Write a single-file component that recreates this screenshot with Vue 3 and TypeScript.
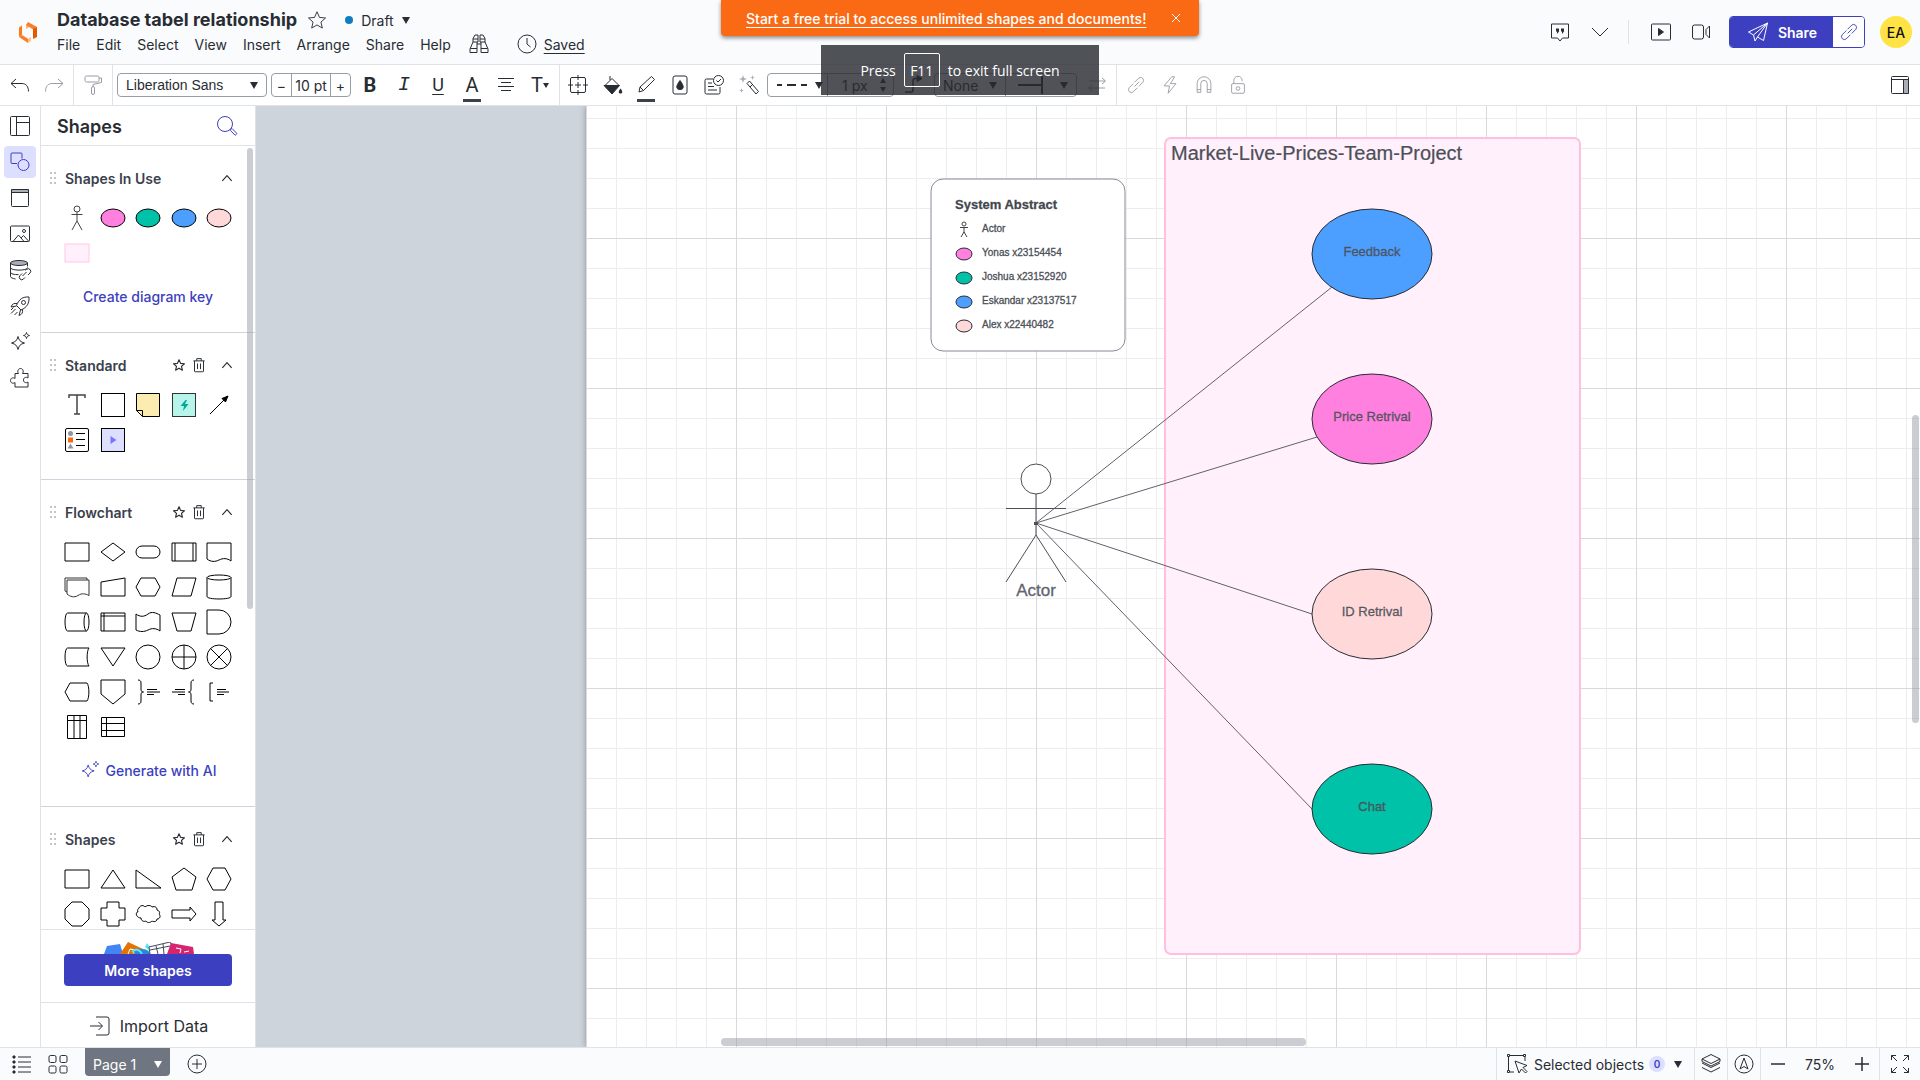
<script setup lang="ts">
import { ref } from 'vue'

// 24x24 line icons, stroked with the current text colour
const icons: Record<string, string> = {
  undo: '<path d="M8 6l-5 4.500 5 4.500M3 10.500h11c4 0 6.500 3 6.500 8"/>',
  redo: '<path d="M16 6l5 4.500-5 4.500M21 10.500H10c-4 0-6.500 3-6.500 8"/>',
  painter: '<rect x="4" y="3" width="14" height="6" rx="1.500"/><path d="M18 5h2.500v4.500l-8.500 2V14"/><rect x="10.500" y="13.500" width="3" height="8" rx="1.500"/>',
  align: '<path d="M4 5.500h16M7 9.500h10M4 13.500h16M7 17.500h10"/>',
  frame: '<rect x="4.500" y="4.500" width="15" height="15" rx="1.500"/><path d="M12 2v5M12 9v6M12 17v5M2 12h5M9 12h6M17 12h5"/>',
  bucket: '<path d="M10 3v4M5 12.500l7-7 7 7"/><path d="M4 12.500h15.500L12 21z" fill="currentColor"/><path d="M20.500 15.500c3 4 1.500 5 0 5s-3-1 0-5z" fill="currentColor" stroke="none"/>',
  pencil: '<path d="M5 19l1-5L17.500 3.500l3 3L9.500 17.500zM6 14l3.500 3.500"/>',
  drop: '<rect x="5" y="3" width="14" height="18" rx="2"/><path d="M12 7.500c5 6.500 3.500 9 0 9s-5-2.500 0-9z" fill="currentColor"/>',
  note: '<path d="M11 6H4.500a1.500 1.500 0 0 0-1.500 1.500v12A1.500 1.500 0 0 0 4.500 21h12a1.500 1.500 0 0 0 1.500-1.500V14M6 10h4M6 13.500h6M6 17h9"/><circle cx="16.500" cy="7.500" r="5"/><path d="M14.500 7.500l1.500 1.500 3-3"/>',
  wand: '<path d="M11 10.500l2.500-2.500 9 10.500-2.500 2.500zM14 14l2.500-2.500"/><path d="M7 2l1 3 3 1-3 1-1 3-1-3-3-1 3-1zM16.500 2l.6 1.900 1.900.6-1.900.6-.6 1.900-.6-1.900-1.900-.6 1.900-.6zM5.500 15l.6 1.900 1.900.6-1.900.6-.6 1.900-.6-1.900-1.900-.6 1.900-.6z" fill="#aaadb5" stroke="none"/>',
  elbow: '<path d="M3 19h6c1.500 0 2-.5 2-2V8c0-1.500.5-2.500 2-2.500h6" stroke-width="1.500"/><path d="M15 2.500v6l5-3z" fill="currentColor"/>',
  swap: '<path d="M4 8h16M17 5l3.500 3-3.500 3M20 15H4M7 12l-3.500 3L7 18"/>',
  link: '<path d="M10.500 13.500l5-5M9 10.500l-4.500 4.500a3.200 3.200 0 0 0 4.500 4.500l4.500-4.500M10.500 9l4.500-4.500a3.200 3.200 0 0 1 4.500 4.500L15 13.500"/>',
  bolt: '<path d="M14 3l-8.500 10h6L10 21l8.500-10.500h-6L17 3z"/>',
  magnet: '<path d="M4.500 20v-9.500a7.500 7.500 0 0 1 15 0V20h-4v-9.500a3.500 3.500 0 0 0-7 0V20zM4.500 17h4M15.500 17h4"/>',
  lock: '<rect x="5" y="10.500" width="14" height="10.500" rx="1.500"/><path d="M7.500 10.500V7a4.500 4.500 0 0 1 9 0v1"/><circle cx="12" cy="15.800" r="2"/>',
  dock: '<rect x="3.500" y="3.500" width="17" height="17" rx="1"/><path d="M15.500 6.500h5v14h-5z" fill="#aaadb5"/><path d="M3.500 6.500h17"/>',
  star: '<path d="M12 3l2.700 6.200 6.600.6-5 4.500 1.500 6.500-5.800-3.400-5.800 3.400 1.500-6.500-5-4.500 6.600-.6z"/>',
  binoculars: '<path d="M8 3h3v7H6V6.500zM16 3h-3v7h5V6.500zM6 7h5M13 7h5M6 10l-3 7v3.500h7V10M18 10l3 7v3.500h-7V10M3.500 16.500H10M14 16.500h6.500M10 12h4"/>',
  clock: '<circle cx="12" cy="12" r="9"/><path d="M12 6v6l3.500 3"/>',
  comment: '<path d="M3.500 4h17v14H14.500l-2.500 3-2.500-3h-6z"/><path d="M8 8.500h3v3l-2 2.500v-2.500H8zM13 8.500h3v3l-2 2.500v-2.500h-1z" fill="currentColor" stroke="none"/>',
  down: '<path d="M4 8l8 8 8-8"/>',
  up: '<path d="M4 17l8-9 8 9"/>',
  play: '<rect x="2.500" y="4" width="19" height="16" rx="1"/><path d="M9.500 8.500v7l5-3.500z" fill="currentColor"/>',
  video: '<rect x="3.500" y="5" width="11" height="14" rx="2"/><path d="M17 9.500L20.500 6v12L17 14.500z"/>',
  plane: '<path d="M21.500 3L2.500 12l5 3 14-12-10 14 6 3.500zM7.500 15l1.500 6 2.500-4"/>',
  layout: '<rect x="2.500" y="2.500" width="19" height="19" rx="1"/><path d="M8.500 2.500v19M8.500 8.500h13"/>',
  shapes: '<path d="M9 13.500H4A1 1 0 0 1 3 12.500V4a1 1 0 0 1 1-1h9a1 1 0 0 1 1 1v4.500"/><circle cx="15.500" cy="15" r="5.500"/>',
  page: '<path d="M3.500 3.500h17v3h-17z" fill="#aaadb5"/><rect x="3.500" y="3.500" width="17" height="17" rx="1"/><path d="M3.500 6.500h17"/>',
  image: '<rect x="2.500" y="4" width="19" height="15.500" rx="1"/><path d="M5 19.500l5.500-6.500 5.500 6.500M13 16l2.500-2.500 5 5.500"/><circle cx="16" cy="9" r="1.500"/>',
  database: '<ellipse cx="11" cy="5" rx="8.500" ry="2.500" fill="#aaadb5"/><path d="M2.500 5v13.500c0 1 2 2 5 2.500M19.500 5v3.500M2.500 9.500c0 3.500 17 3.500 17 0M2.500 14c0 2 4 2.700 8 2.600"/><path d="M14.500 18l4-4M14 15.500l-2 2a2.300 2.300 0 0 0 3.500 3.500l1.500-1.500M17.500 12.500l1-1a2.300 2.300 0 0 1 3.500 3.500l-2 2"/>',
  rocket: '<path d="M21 3c-6-.5-10 2-12.500 8.500l4.500 4.500C19 13.500 21.500 9 21 3zM9 9.500c-3-.5-5 .5-6 3.500l5.500-1M14.500 15.500c.5 3-.5 5-3.500 6l1.500-5.500"/><circle cx="15.500" cy="8.500" r="2"/><path d="M7.500 15L3 19.500M5.500 13.500L3 16M9.500 18L6.500 21"/>',
  sparkle: '<path d="M10 6.500c1 4 2.500 5.500 6.500 6.500-4 1-5.500 2.500-6.500 6.500-1-4-2.500-5.500-6.500-6.500 4-1 5.500-2.500 6.500-6.500z"/><path d="M18.500 2.500c.5 2 1 2.500 3 3-2 .5-2.500 1-3 3-.5-2-1-2.500-3-3 2-.5 2.500-1 3-3z"/>',
  puzzle: '<path d="M7 7.500h3.500c-1.500-2-.5-5 2-5s3.500 3 2 5H20V12c-2-1.500-4.500-.5-4.500 2s2.500 3.500 4.500 2v5H7v-4.500c-2 1.500-4.500.5-4.500-2s2.500-3.500 4.500-2z"/>',
  search: '<circle cx="10" cy="10" r="7.500"/><path d="M15.500 15.500l1.500-1 5 5-1.800 1.800-5-5z"/>',
  trash: '<path d="M4.500 6.500h15M6 6.500v13.500a1 1 0 0 0 1 1h10a1 1 0 0 0 1-1V6.500M9 6.500v-3h6v3M10 10v7.500M14 10v7.500"/>',
  import: '<path d="M8 3h11a2 2 0 0 1 2 2v14a2 2 0 0 1-2 2H8M2 12h12M10.500 8l4 4-4 4"/>',
  list: '<path d="M8 5h13M8 10h13M8 15h13M8 20h13"/><path d="M3 4h2v2H3zM3 9h2v2H3zM3 14h2v2H3zM3 19h2v2H3z" fill="currentColor"/>',
  grid: '<rect x="3" y="3.500" width="7" height="7" rx="1.500"/><rect x="14" y="3.500" width="7" height="7" rx="1.500"/><rect x="3" y="14" width="7" height="7" rx="1.500"/><rect x="14" y="14" width="7" height="7" rx="1.500"/>',
  add: '<circle cx="12" cy="12" r="9"/><path d="M12 7v10M7 12h10"/>',
  pick: '<path d="M5 3.500h13.500M3.500 5v13.500M20 5v4M5 20h4"/><rect x="2.500" y="2.500" width="2" height="2"/><rect x="18.500" y="2.500" width="2" height="2"/><rect x="2.500" y="18.500" width="2" height="2"/><path d="M10 9l4 12 2.500-4 4 4 1.500-1.500-4-4 4-2z"/>',
  layers: '<path d="M12 2.500l9 4.500-9 4.500L3 7zM3 11l9 4.500 9-4.500M3 15.500l9 4.500 9-4.500M3 7v2.500l9 4.500 9-4.500V7"/>',
  compass: '<circle cx="12" cy="12" r="9"/><path d="M12 6l4 11-4-2.500L8 17z"/>',
  minus: '<path d="M5 12h14" stroke-width="1.500"/>',
  plus: '<path d="M5 12h14M12 5v14" stroke-width="1.500"/>',
  expand: '<path d="M3.500 8V3.500H8M3.500 3.500l5.500 5.500M16 3.500h4.500V8M20.500 3.500L15 9M3.500 16v4.500H8M3.500 20.500L9 15M20.500 16v4.500H16M20.500 20.500L15 15"/>',
}

const menus = ['File', 'Edit', 'Select', 'View', 'Insert', 'Arrange', 'Share', 'Help']
const rail = [
  ['layout', 'Templates'], ['shapes', 'Shapes'], ['page', 'Pages'], ['image', 'Images'],
  ['database', 'Data'], ['rocket', 'Accelerators'], ['sparkle', 'AI'], ['puzzle', 'Extensions'],
]

const oval = (fill: string) => `<ellipse cx="13" cy="13" rx="12" ry="9" fill="${fill}"/>`

// 26x26 shape thumbnails
const sections = [
  {
    title: 'Shapes In Use', editable: false, link: 'Create diagram key', ai: false,
    shapes: [
      '<g stroke="#444"><circle cx="13" cy="4" r="3"/><path d="M13 7v9M7.500 9.500h11M13 16l-5 9M13 16l5 9"/></g>',
      oval('#ff80df'), oval('#00c2a8'), oval('#4d9fff'), oval('#ffd9d9'),
      '<rect x="1" y="4" width="24" height="18" fill="#fff0fc" stroke="#ffc8e2"/>',
    ],
  },
  {
    title: 'Standard', editable: true, link: '', ai: false,
    shapes: [
      '<path d="M5 6V3h16v3M13 3v19M10 22h6" stroke="#444" stroke-width="1.500"/>',
      '<rect x="1.500" y="1.500" width="23" height="23"/>',
      '<path d="M1.500 1.500h23v23H7.500l-6-6z" fill="#fcecb0"/><path d="M1.500 18.500h6v6"/>',
      '<rect x="1.500" y="1.500" width="23" height="23" fill="#b7f5ea" stroke="#333"/><path d="M14.500 8l-5 6h3.500l-1 5 5.500-7H14l2-4z" fill="#00a99a" stroke="none"/>',
      '<path d="M4 22L20 6"/><path d="M22 4l-2.500 6-3.500-3.500z" fill="#000"/>',
      '<rect x="1.500" y="1.500" width="23" height="23" rx="1.500"/><circle cx="6.500" cy="6.500" r="2.500" fill="#8f95a3" stroke="none"/><path d="M4 10.500h5v5H4z" fill="#fa6a14" stroke="none"/><path d="M6.500 16.500l3 5h-6z" fill="#8f95a3" stroke="none"/><path d="M12 6.500h9M12 12.500h9M12 18.500h9"/>',
      '<rect x="1.500" y="1.500" width="23" height="23" fill="#dddfff"/><path d="M10.500 9v8l6-4z" fill="#7776ff" stroke="none"/>',
    ],
  },
  {
    title: 'Flowchart', editable: true, link: 'Generate with AI', ai: true,
    shapes: [
      '<path d="M1 4h24v18H1z"/>',
      '<path d="M13 4l12 9-12 9L1 13z"/>',
      '<rect x="1" y="7" width="24" height="12" rx="6"/>',
      '<path d="M1 4h24v18H1zM4 4v18M22 4v18"/>',
      '<path d="M1 4h24v18c-4-3-8-3-12-1s-8 2-12-1z"/>',
      '<path d="M3 6h22v15.500c-4-2-7-2.500-11 0s-8 1-11-1.500zM3 18l-2-1V4h22v2" stroke="#333"/>',
      '<path d="M1 8l24-4v18H1z"/>',
      '<path d="M6 4h14l5 9-5 9H6l-5-9z"/>',
      '<path d="M6 4h19l-5 18H1z"/>',
      '<ellipse cx="13" cy="3.500" rx="12" ry="2.500"/><path d="M1 3.500v19c0 3.300 24 3.300 24 0v-19"/>',
      '<ellipse cx="22.500" cy="13" rx="2.500" ry="9"/><path d="M22.500 4h-19c-3.300 0-3.300 18 0 18h19"/>',
      '<path d="M1 4h24v18H1zM4 4v18M1 7h24"/>',
      '<path d="M1 5c4 3 8 3 12 0s8-1 12 1v16c-4-3-8-3-12-1s-8 2-12 0z"/>',
      '<path d="M1 4h24l-5 18H6z"/>',
      '<path d="M1 1h12a12 12 0 0 1 0 24H1z"/>',
      '<path d="M25 4H3.500c-3.300 0-3.300 18 0 18H25c-2.500-3-2.500-15 0-18z"/>',
      '<path d="M1 4h24L13 22z"/>',
      '<circle cx="13" cy="13" r="12"/>',
      '<circle cx="13" cy="13" r="12"/><path d="M1 13h24M13 1v24"/>',
      '<circle cx="13" cy="13" r="12"/><path d="M4.500 4.500l17 17M21.500 4.500l-17 17"/>',
      '<path d="M6 4h17c2.500 3 2.500 15 0 18H6l-5-9z"/>',
      '<path d="M1 1h24v14l-12 10L1 15z"/>',
      '<path d="M3 1c2 0 3 1 3 3v6c0 2 .5 3 2.500 3-2 0-2.500 1-2.500 3v6c0 2-1 3-3 3M12 10.500h10M12 13h13M12 15.500h7"/>',
      '<path d="M23 1c-2 0-3 1-3 3v6c0 2-.5 3-2.500 3 2 0 2.500 1 2.500 3v6c0 2 1 3 3 3M14 10.500H4M14 13H1M14 15.500H7"/>',
      '<path d="M7 4H4v18h3M11 10.500h9M11 13h12M11 15.500h7"/>',
      '<path d="M3.500 1.500h19v23h-19zM3.500 6.500h19M10 1.500v23M16 1.500v23"/>',
      '<path d="M1.500 3.500h23v19h-23zM6.500 3.500v19M1.500 9.500h23M1.500 16.500h23"/>',
    ],
  },
  {
    title: 'Shapes', editable: true, link: '', ai: false,
    shapes: [
      '<path d="M1 4h24v18H1z"/>',
      '<path d="M13 4l12 18H1z"/>',
      '<path d="M1 4l25 18H1z"/>',
      '<path d="M13 2l12 9-4 13H5L1 11z"/>',
      '<path d="M7 2h12l6 11-6 11H7L1 13z"/>',
      '<path d="M8 1h10l7 7v10l-7 7H8l-7-7V8z"/>',
      '<path d="M7 1h12v6h6v12h-6v6H7v-6H1V7h6z"/>',
      '<path d="M4 7c1-3 5-3 6-1 2-2 6-2 7 0 3-1 5 0 5 3 3 1 3 3 2 4 2 2 1 5-2 5 0 3-4 3-5 2-2 2-5 2-6 0-2 1-5 0-5-3-5 0-6-6-3-6-1-2 0-3 1-4z"/>',
      '<path d="M1 9h18V6l6 7-6 7v-3H1z"/>',
      '<path d="M9 1h8v18h3l-7 6-7-6h3z"/>',
    ],
  },
]

const useCases = [
  { label: 'Feedback', y: 254, fill: '#4d9fff', end: [1332, 287] },
  { label: 'Price Retrival', y: 419, fill: '#ff80df', end: [1317, 437] },
  { label: 'ID Retrival', y: 614, fill: '#ffd9d9', end: [1312, 614] },
  { label: 'Chat', y: 809, fill: '#00c2a8', end: [1312, 809] },
]

const legend = [
  { label: 'Yonas x23154454', y: 254, fill: '#ff80df' },
  { label: 'Joshua x23152920', y: 278, fill: '#00c2a8' },
  { label: 'Eskandar x23137517', y: 302, fill: '#4d9fff' },
  { label: 'Alex x22440482', y: 326, fill: '#ffd9d9' },
]

const fontSize = ref('10 pt')
const lineWidth = ref('1 px')
</script>

<template>
  <div class="app">
    <header class="header">
      <a class="logo" href="#" aria-label="Home">
        <svg width="20" height="24" viewBox="0 0 20 24">
          <path d="M1 7l3-2v10l-3 1z" fill="#ffb066" /><path d="M4 6v9l-3 2V8z" fill="#fb7a1e" />
          <path d="M1 17l3-2 8 5-2 3z" fill="#fa7f2a" /><path d="M10 23l3-2v-4l-3 2z" fill="#ffc27a" />
          <path d="M8 5V9l3-2V3z" fill="#ffb066" /><path d="M10 2l9 5-3 3-8-5z" fill="#fa7f2a" />
          <path d="M15 9l4-2v10l-4 2z" fill="#e55a00" />
        </svg>
      </a>
      <div class="heading">
        <div class="title-row">
          <h1>Database tabel relationship</h1>
          <button class="plain" aria-label="Favorite"><svg class="icon s20" viewBox="0 0 24 24" v-html="icons.star" /></button>
          <button class="plain status"><i class="dot" />Draft<i class="tri" /></button>
        </div>
        <nav class="menu-row">
          <button v-for="m in menus" :key="m" class="plain">{{ m }}</button>
          <button class="plain find" aria-label="Find"><svg class="icon" viewBox="0 0 24 24" v-html="icons.binoculars" /></button>
          <a class="saved" href="#"><svg class="icon" viewBox="0 0 24 24" v-html="icons.clock" /><span>Saved</span></a>
        </nav>
      </div>
      <div class="actions">
        <button class="tool" aria-label="Comments"><svg class="icon" viewBox="0 0 24 24" v-html="icons.comment" /></button>
        <button class="tool" aria-label="More"><svg class="icon" viewBox="0 0 24 24" v-html="icons.down" /></button>
        <i class="rule" />
        <button class="tool" aria-label="Present"><svg class="icon" viewBox="0 0 24 24" v-html="icons.play" /></button>
        <button class="tool" aria-label="Video call"><svg class="icon" viewBox="0 0 24 24" v-html="icons.video" /></button>
        <div class="share">
          <button class="share-main"><svg class="icon" viewBox="0 0 24 24" v-html="icons.plane" />Share</button>
          <button class="share-link" aria-label="Copy link"><svg class="icon s20" viewBox="0 0 24 24" v-html="icons.link" /></button>
        </div>
        <button class="avatar">EA</button>
      </div>
    </header>

    <div class="toolbar">
      <div class="group">
        <button class="tool" aria-label="Undo"><svg class="icon" viewBox="0 0 24 24" v-html="icons.undo" /></button>
        <button class="tool off" aria-label="Redo"><svg class="icon" viewBox="0 0 24 24" v-html="icons.redo" /></button>
      </div>
      <div class="group">
        <button class="tool off" aria-label="Format painter"><svg class="icon" viewBox="0 0 24 24" v-html="icons.painter" /></button>
      </div>
      <div class="group">
        <div class="box font">
          <select aria-label="Font"><option>Liberation Sans</option></select><i class="tri" />
        </div>
        <div class="box size">
          <button class="plain">−</button>
          <input v-model="fontSize" aria-label="Font size">
          <button class="plain">+</button>
        </div>
        <button class="tool glyph bold">B</button>
        <button class="tool glyph italic">I</button>
        <button class="tool glyph under">U</button>
        <button class="tool glyph bar">A</button>
        <button class="tool" aria-label="Align"><svg class="icon" viewBox="0 0 24 24" v-html="icons.align" /></button>
        <button class="tool glyph">T<i class="tri small" /></button>
      </div>
      <div class="group objects">
        <button class="tool" aria-label="Position"><svg class="icon" viewBox="0 0 24 24" v-html="icons.frame" /></button>
        <button class="tool" aria-label="Fill"><svg class="icon" viewBox="0 0 24 24" v-html="icons.bucket" /></button>
        <button class="tool bar" aria-label="Line color"><svg class="icon" viewBox="0 0 24 24" v-html="icons.pencil" /></button>
        <button class="tool" aria-label="Opacity"><svg class="icon" viewBox="0 0 24 24" v-html="icons.drop" /></button>
        <button class="tool" aria-label="Tasks"><svg class="icon" viewBox="0 0 24 24" v-html="icons.note" /></button>
        <button class="tool" aria-label="Magic"><svg class="icon" viewBox="0 0 24 24" v-html="icons.wand" /></button>
        <div class="box stroke">
          <button class="plain cell dash" aria-label="Line style"><svg width="32" height="4"><path d="M0 2h5M10 2h9M24 2h6" stroke="#282c33" stroke-width="2" /></svg><i class="tri" /></button>
          <div class="cell width">
            <input v-model="lineWidth" aria-label="Line width">
            <span class="spin"><i class="tri up small" /><i class="tri small" /></span>
          </div>
        </div>
        <button class="tool" aria-label="Line shape"><svg class="icon" viewBox="0 0 24 24" v-html="icons.elbow" /></button>
        <div class="box ends">
          <button class="plain cell">None<i class="tri" /></button>
          <button class="plain cell" aria-label="Line end"><svg width="26" height="18"><path d="M0 9h24M24 0v18" stroke="#282c33" stroke-width="2" /></svg><i class="tri" /></button>
        </div>
        <button class="tool off" aria-label="Swap ends"><svg class="icon" viewBox="0 0 24 24" v-html="icons.swap" /></button>
      </div>
      <div class="group last">
        <button v-for="n in ['link', 'bolt', 'magnet', 'lock']" :key="n" class="tool off" :aria-label="n"><svg class="icon s20" viewBox="0 0 24 24" v-html="icons[n]" /></button>
      </div>
      <button class="tool dock" aria-label="Toggle panel"><svg class="icon" viewBox="0 0 24 24" v-html="icons.dock" /></button>
    </div>

    <div class="body">
      <nav class="rail">
        <button v-for="[name, label] in rail" :key="name" :class="{ active: name === 'shapes' }" :aria-label="label">
          <svg class="icon" viewBox="0 0 24 24" v-html="icons[name]" />
        </button>
      </nav>

      <aside class="panel">
        <div class="panel-head">
          <h2>Shapes</h2>
          <button class="plain" aria-label="Search"><svg class="icon" viewBox="0 0 24 24" v-html="icons.search" /></button>
        </div>
        <div class="list">
          <section v-for="s in sections" :key="s.title">
            <div class="section-head">
              <svg class="grip" width="6" height="12"><path d="M1 0v12M5 0v12" stroke="#c2c4ca" stroke-width="2" stroke-dasharray="2 3" /></svg>
              <h3>{{ s.title }}</h3>
              <template v-if="s.editable">
                <button class="plain" aria-label="Favorite"><svg class="icon s14" viewBox="0 0 24 24" v-html="icons.star" /></button>
                <button class="plain" aria-label="Remove"><svg class="icon s16" viewBox="0 0 24 24" v-html="icons.trash" /></button>
              </template>
              <button class="plain fold" aria-label="Collapse"><svg class="icon s14" viewBox="0 0 24 24" v-html="icons.up" /></button>
            </div>
            <div class="shapes">
              <svg v-for="(shape, i) in s.shapes" :key="i" width="26" height="26" viewBox="0 0 26 26" v-html="shape" />
            </div>
            <button v-if="s.link" class="plain link"><svg v-if="s.ai" class="icon s20" viewBox="0 0 24 24" v-html="icons.sparkle" />{{ s.link }}</button>
          </section>
          <i class="thumb" />
        </div>
        <div class="more">
          <svg width="96" height="12" viewBox="0 0 96 12">
            <path d="M4 12l3-8 13-2 3 10z" fill="#4285f4" /><path d="M20 12l8-12 15 7-2 5z" fill="#e37400" />
            <path d="M28 12l2-5 5 1M33 11h4" stroke="#fff" fill="none" /><ellipse cx="42" cy="12" rx="8" ry="5" fill="#2b88d8" />
            <path d="M32 10c4-4 8-2 10 2" stroke="#50e6ff" stroke-width="2" fill="none" /><path d="M47 1l2 3 4 1-4 3-4-3z" fill="#50e6ff" />
            <path d="M50 12l-1-7 21-5 2 4-2 8M50 8l20-4M56 4l2 8M63 2l1 10" fill="#fff" stroke="#444b57" />
            <path d="M67 12l4-11 22 4 1 7z" fill="#d6246e" /><path d="M76 6l5 1-1 4M84 10l5-1" stroke="#fff" fill="none" />
          </svg>
          <button class="more-btn">More shapes</button>
        </div>
        <button class="plain import"><svg class="icon" viewBox="0 0 24 24" v-html="icons.import" />Import Data</button>
      </aside>

      <main class="canvas">
        <div class="sheet" />
        <svg class="drawing" width="100%" height="100%">
          <g transform="translate(-256 -106)">
            <rect x="1165" y="138" width="415" height="816" rx="6" fill="#fff0fc" stroke="#ffbfdf" stroke-width="2" />
            <text x="1171" y="160" class="t20">Market-Live-Prices-Team-Project</text>

            <rect x="931" y="179" width="194" height="172" rx="12" fill="#fff" stroke="#868a94" />
            <text x="955" y="209" class="t13 strong">System Abstract</text>
            <path d="M964 227v6M960 227.500h8M964 232l-3 5M964 232l3 5" stroke="#444" fill="none" />
            <circle cx="964" cy="224" r="2" fill="none" stroke="#444" />
            <text x="982" y="232" class="t10">Actor</text>
            <g v-for="item in legend" :key="item.label">
              <ellipse cx="964" :cy="item.y" rx="8" ry="6" :fill="item.fill" stroke="#282c33" />
              <text x="982" :y="item.y + 2" class="t10">{{ item.label }}</text>
            </g>

            <g fill="none" stroke="#4c4f57">
              <circle cx="1036" cy="479" r="15" fill="#fff" />
              <path d="M1036 494v41M1006 508.500h60M1006 582l30-47 30 47" />
            </g>
            <text x="1036" y="596" class="t17" text-anchor="middle">Actor</text>

            <g v-for="u in useCases" :key="u.label">
              <path :d="`M1036 523L${u.end[0]} ${u.end[1]}`" stroke="#5f626d" />
              <ellipse cx="1372" :cy="u.y" rx="60" ry="45" :fill="u.fill" stroke="#282c33" />
              <text x="1372" :y="u.y + 2" class="t13" text-anchor="middle">{{ u.label }}</text>
            </g>
            <rect x="1034" y="522" width="4" height="3" fill="#4c4f57" />
          </g>
        </svg>
        <i class="bar-h" /><i class="bar-v" />
      </main>
    </div>

    <footer class="footer">
      <button class="tool" aria-label="Outline"><svg class="icon" viewBox="0 0 24 24" v-html="icons.list" /></button>
      <button class="tool" aria-label="Page grid"><svg class="icon" viewBox="0 0 24 24" v-html="icons.grid" /></button>
      <button class="tab">Page 1<i class="tri" /></button>
      <button class="tool" aria-label="Add page"><svg class="icon" viewBox="0 0 24 24" v-html="icons.add" /></button>
      <div class="foot-right">
        <button class="plain selected"><svg class="icon" viewBox="0 0 24 24" v-html="icons.pick" />Selected objects<span class="badge">0</span><i class="tri" /></button>
        <button class="plain foot-icon" aria-label="Layers"><svg class="icon" viewBox="0 0 24 24" v-html="icons.layers" /></button>
        <button class="plain foot-icon" aria-label="Navigate"><svg class="icon" viewBox="0 0 24 24" v-html="icons.compass" /></button>
        <div class="zoom">
          <button class="tool" aria-label="Zoom out"><svg class="icon" viewBox="0 0 24 24" v-html="icons.minus" /></button>
          <span>75%</span>
          <button class="tool" aria-label="Zoom in"><svg class="icon" viewBox="0 0 24 24" v-html="icons.plus" /></button>
        </div>
        <button class="plain full" aria-label="Full screen"><svg class="icon" viewBox="0 0 24 24" v-html="icons.expand" /></button>
      </div>
    </footer>

    <div class="banner">
      <a href="#">Start a free trial to access unlimited shapes and documents!</a>
      <button class="plain" aria-label="Dismiss"><svg width="8" height="8"><path d="M0 0l8 8M8 0L0 8" stroke="#fff" /></svg></button>
    </div>
    <div class="toast">Press <kbd>F11</kbd> to exit full screen</div>
  </div>
</template>

<style>
body { margin: 0; }
</style>

<style scoped>
* { box-sizing: border-box; }
.app { position: relative; display: flex; flex-direction: column; height: 100vh; overflow: hidden; background: #fff; color: #282c33; font: 14px Inter, "Liberation Sans", sans-serif; }
h1, h2, h3 { margin: 0; font-weight: 600; }
button, input, select { font: inherit; color: inherit; }
.plain, .tool { display: flex; align-items: center; justify-content: center; padding: 0; border: 0; background: none; white-space: nowrap; }
.tool { flex: none; width: 34px; height: 32px; }
.off { color: #9a9da5; }
.icon { display: block; flex: none; width: 24px; height: 24px; fill: none; stroke: currentColor; stroke-width: 1; stroke-linejoin: round; }
.s20 { width: 22px; height: 22px; }
.s16 { width: 18px; height: 18px; stroke-width: 1.3; }
.s14 { width: 14px; height: 14px; stroke-width: 2; }
.tri { display: block; flex: none; width: 0; height: 0; border: 4px solid transparent; border-top: 7px solid #282c33; border-bottom: 0; }
.tri.small { border-width: 5px 3px 0; }
.tri.up { border-top: 0; border-bottom: 5px solid #282c33; }

.header { display: flex; height: 65px; flex: none; border-bottom: 1px solid #dfe3e8; background: #fafbfd; }
.logo { display: flex; width: 57px; padding: 20px 0 0 18px; }
.heading { padding-top: 8px; }
.title-row, .menu-row { display: flex; align-items: center; height: 24px; }
h1 { font-size: 18px; font-weight: 700; line-height: 24px; margin-right: 9px; white-space: nowrap; }
.status { margin-left: 17px; gap: 8px; }
.dot { width: 8px; height: 8px; border-radius: 50%; background: #0f7dc2; }
.menu-row { gap: 16px; }
.saved { display: flex; align-items: center; gap: 5px; margin-left: 8px; color: inherit; text-decoration: none; }
.saved span { text-decoration: underline; text-underline-offset: 3px; }
.actions { display: flex; align-items: center; margin-left: auto; padding-right: 8px; }
.actions .tool { margin: 0 3px; }
.rule { width: 1px; height: 24px; margin: 0 12px 0 8px; background: #dfe3e8; }
.share { display: flex; width: 136px; height: 32px; margin: 0 15px 0 8px; border-radius: 4px; border: 1px solid #3c3fc0; overflow: hidden; background: #fff; }
.share-main { display: flex; flex: 1; align-items: center; justify-content: center; gap: 8px; border: 0; background: #3c3fc0; color: #fff; font-size: 14px; font-weight: 600; }
.share-link { display: flex; width: 31px; align-items: center; justify-content: center; padding: 0; border: 0; background: #fff; color: #3c3fc0; }
.avatar { width: 32px; height: 32px; padding: 0; border: 0; border-radius: 50%; background: #ffe244; color: #111; font-size: 14px; font-weight: 500; }

.toolbar { display: flex; height: 41px; flex: none; border-bottom: 1px solid #dfe3e8; background: #fff; }
.group { display: flex; align-items: center; padding: 0 2px; border-right: 1px solid #dfe3e8; }
.group:first-child { padding: 0 2px 0 3px; }
.objects { padding: 0 2px 0 1px; }
.group.last { border: 0; }
.dock { margin: 4px 3px 0 auto; }
.box { display: flex; align-items: center; height: 24px; border: 1px solid #979ea8; border-radius: 4px; background: #fff; }
.font { width: 150px; margin: 0 4px 0 2px; padding-right: 8px; font-family: "Liberation Sans", sans-serif; }
.font select { flex: 1; min-width: 0; padding: 0 8px; border: 0; background: none; appearance: none; outline: 0; }
.size { width: 80px; margin-right: 2px; }
.size button { width: 19px; height: 22px; }
.size input { width: 40px; height: 22px; padding: 0; border: solid #979ea8; border-width: 0 1px; text-align: center; background: none; }
.glyph { font-size: 20px; line-height: 24px; font-family: Roboto, sans-serif; }
.bold { font-weight: 700; }
.italic { font-family: "Liberation Mono", monospace; font-style: italic; }
.under { font-size: 18px; text-decoration: underline; text-underline-offset: 3px; }
.bar { position: relative; }
.bar::after { content: ""; position: absolute; left: 8px; bottom: -1px; width: 18px; height: 3px; background: #3a414d; }
.stroke { width: 127px; margin-left: 2px; }
.cell { display: flex; align-items: center; justify-content: space-between; height: 22px; padding: 0 8px; }
.dash { width: 60px; padding: 0 4px 0 9px; border-right: 1px solid #979ea8; }
.width { flex: 1; min-width: 0; padding: 0 7px 0 14px; }
.width input { width: 34px; padding: 0; border: 0; background: none; }
.spin { display: flex; flex-direction: column; gap: 4px; }
.stroke + .tool { margin: 0 3px; }
.ends { width: 143px; margin-right: 3px; }
.ends .cell:first-child { width: 71px; border-right: 1px solid #979ea8; }
.ends .cell:last-child { flex: 1; padding-left: 12px; }

.body { display: flex; flex: 1; min-height: 0; }
.rail { display: flex; flex-direction: column; gap: 4px; width: 41px; flex: none; padding: 4px; border-right: 1px solid #dfe3e8; background: #fff; }
.rail button { display: flex; align-items: center; justify-content: center; width: 32px; height: 32px; padding: 0; border: 0; border-radius: 4px; background: none; }
.rail .active { background: #dddfff; color: #3c3fc0; }
.panel { display: flex; flex-direction: column; width: 215px; flex: none; border-right: 1px solid #dfe3e8; background: #fff; }
.panel-head { display: flex; align-items: center; justify-content: space-between; height: 40px; flex: none; padding: 0 16px; border-bottom: 1px solid #dfe3e8; }
.panel-head h2 { padding-top: 2px; font-size: 18px; }
.panel-head button { color: #3c3fc0; }
.list { position: relative; flex: 1; min-height: 0; overflow: hidden; }
section { padding: 20px 0 21px; border-bottom: 1px solid #cdd4dc; }
.section-head { display: flex; align-items: center; height: 24px; padding: 0 19px 0 9px; }
.section-head h3 { flex: 1; margin-left: 9px; font-size: 14px; color: #3a414d; }
.section-head button { width: 18px; height: 18px; margin-right: 2px; }
.section-head .fold { margin: 0 0 0 8px; }
.shapes { display: grid; grid-template-columns: repeat(5, 26px); justify-content: space-between; row-gap: 9px; margin: 15px 23px 5px; fill: none; stroke: #000; stroke-width: 1; }
.shapes svg { display: block; }
.link { width: 100%; height: 24px; margin: 18px 0 3px; gap: 4px; color: #3c3fc0; font-weight: 500; }
.thumb { position: absolute; top: 2px; right: 2px; width: 6px; height: 461px; border-radius: 3px; background: rgba(150, 155, 165, 0.5); }
.more { display: flex; flex-direction: column; align-items: center; height: 74px; flex: none; padding: 12px 23px 0; border: solid #dfe3e8; border-width: 1px 0; }
.more svg { display: block; flex: none; }
.more-btn { width: 100%; height: 32px; border: 0; border-radius: 4px; background: #3c3fc0; color: #fff; font-weight: 600; }
.import { height: 44px; flex: none; gap: 8px; padding-top: 2px; font-size: 16px; }

.canvas { position: relative; display: flex; flex: 1; min-width: 0; overflow: hidden; background: #cdd4dc; }
.sheet { flex: 1; margin-left: 330px; background: linear-gradient(90deg, #d9d9db 1px, transparent 1px) 0 132px / 150px 150px, linear-gradient(#d9d9db 1px, transparent 1px) 0 132px / 150px 150px, linear-gradient(90deg, #ededed 1px, transparent 1px) 0 132px / 30px 30px, linear-gradient(#ededed 1px, transparent 1px) 0 132px / 30px 30px, #fff; box-shadow: 0 0 6px #8b9099; }
.drawing { position: absolute; inset: 0; font-family: "Liberation Sans", sans-serif; fill: #4c4f57; }
.t20 { font-size: 20px; stroke: #4c4f57; stroke-width: 0.2; }
.t17 { font-size: 17px; fill: #5f646f; stroke: #5f646f; stroke-width: 0.3; }
.t13 { font-size: 13px; fill-opacity: 0.9; stroke: #4c4f57; stroke-width: 0.3; }
.t10 { font-size: 10px; stroke: #4c4f57; stroke-width: 0.3; }
.strong { font-weight: 700; fill: #282c33; }
.bar-h, .bar-v { position: absolute; border-radius: 4px; background: rgba(150, 155, 165, 0.5); }
.bar-h { left: 465px; bottom: 1px; width: 585px; height: 8px; }
.bar-v { right: 1px; top: 309px; width: 7px; height: 308px; }

.footer { display: flex; align-items: center; height: 33px; flex: none; padding-left: 5px; border-top: 1px solid #dfe3e8; background: #fafbfd; }
.footer .tool + .tool { margin-left: 2px; }
.tab { display: flex; align-items: center; justify-content: space-between; align-self: flex-start; width: 85px; height: 28px; margin: 0 10px; padding: 4px 8px 0; border: 0; border-radius: 0 0 4px 4px; background: #6f7681; color: #fff; }
.tab .tri { border-top-color: #fff; }
.foot-right { display: flex; align-self: stretch; margin-left: auto; }
.foot-right > * { border-left: 1px solid #dfe3e8; }
.selected { width: 198px; padding-right: 4px; gap: 5px; }
.selected .tri { margin-left: 4px; }
.badge { width: 16px; height: 16px; border-radius: 50%; background: #dddfff; color: #3c3fc0; font-size: 10px; line-height: 16px; font-weight: 600; text-align: center; }
.foot-icon { width: 33px; }
.zoom { display: flex; align-items: center; justify-content: space-between; width: 119px; }
.full { width: 41px; }

.banner { position: absolute; top: 0; left: 50%; display: flex; align-items: center; justify-content: space-between; width: 478px; height: 36px; padding: 0 19px 0 25px; border-radius: 0 0 4px 4px; background: #fa6a14; box-shadow: 0 2px 4px rgba(0, 0, 0, 0.45); transform: translateX(-50%); }
.banner a { color: #fff; font-weight: 500; white-space: nowrap; text-underline-offset: 3px; }
.toast { position: absolute; top: 45px; left: 50%; display: flex; align-items: center; justify-content: center; gap: 8px; width: 278px; height: 50px; background: rgba(40, 42, 48, 0.81); color: #fff; font: 14px "Open Sans", sans-serif; white-space: nowrap; transform: translateX(-50%); }
kbd { display: flex; align-items: center; justify-content: center; width: 36px; height: 34px; border: 1px solid #fff; border-radius: 2px; font: inherit; }
</style>
